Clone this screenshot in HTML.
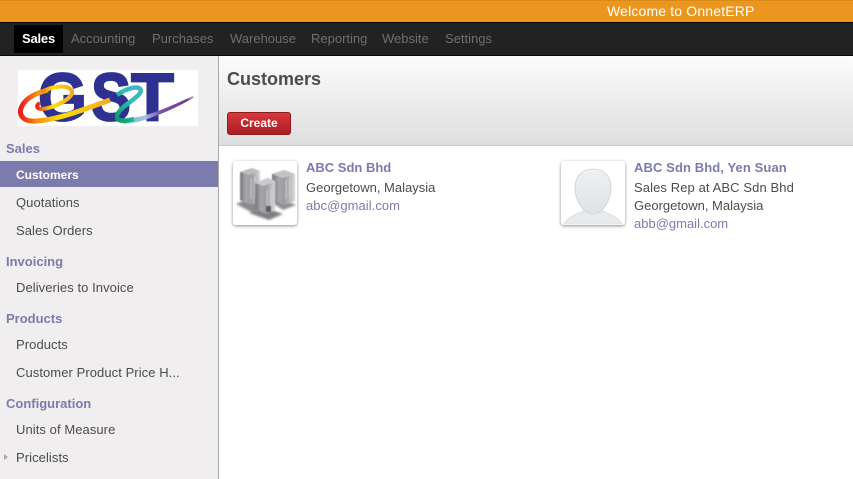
<!DOCTYPE html>
<html><head><meta charset="utf-8">
<style>
html,body{margin:0;padding:0;width:853px;height:479px;overflow:hidden;background:#fff;font-family:"Liberation Sans",Arial,sans-serif;font-size:13px;color:#4c4c4c}
.a{position:absolute;white-space:nowrap}
#top{left:0;top:0;width:853px;height:22px;background:#eb971f;border-top:1px solid #d98a18;box-sizing:border-box}
#nav{left:0;top:22px;width:853px;height:34px;background:#222;border-top:1px solid #0a0a0a;border-bottom:1px solid #0a0a0a;box-sizing:border-box}
.n{top:31px;font-size:13px;line-height:16px;color:#6f6f6f}
#side{left:0;top:56px;width:218px;height:423px;background:#f0eeee;border-right:1px solid #a9a9a9}
.h{left:6px;font-weight:bold;color:#7c7bad;font-size:13px;line-height:16px}
.i{left:16px;color:#4c4c4c;font-size:13px;line-height:16px;letter-spacing:.07px}
.t{font-size:13px;line-height:16px}
.card{width:64px;height:64px;background:#fff;border-radius:3px;box-shadow:0 1px 3px rgba(0,0,0,.45)}
</style></head><body>
<div class="a" id="top"></div>
<div class="a" style="left:607px;top:3px;color:#fff;font-size:14px;line-height:16px;letter-spacing:.16px">Welcome to OnnetERP</div>
<div class="a" id="nav"></div>
<div class="a" style="left:14px;top:25px;width:49px;height:28px;background:#000"></div>
<div class="a n" style="left:22px;color:#fff;font-weight:bold;font-size:13px;letter-spacing:-.2px">Sales</div>
<div class="a n" style="left:71px">Accounting</div>
<div class="a n" style="left:152px">Purchases</div>
<div class="a n" style="left:230px">Warehouse</div>
<div class="a n" style="left:311px">Reporting</div>
<div class="a n" style="left:382px">Website</div>
<div class="a n" style="left:445px">Settings</div>

<div class="a" id="side"></div>
<svg class="a" style="left:18px;top:70px" width="180" height="56" viewBox="0 0 180 56">
<defs>
<linearGradient id="r" x1="0" y1="0" x2="1" y2="0"><stop offset="0" stop-color="#e8201c"/><stop offset=".18" stop-color="#f78a14"/><stop offset=".45" stop-color="#ffdf00"/><stop offset="1" stop-color="#f5a623"/></linearGradient>
<linearGradient id="z" x1="0" y1="1" x2="1" y2="0"><stop offset="0" stop-color="#0a9a68"/><stop offset=".6" stop-color="#2cc0b8"/><stop offset="1" stop-color="#3fb4c8"/></linearGradient>
<linearGradient id="p" x1="0" y1="0" x2="1" y2="0"><stop offset="0" stop-color="#5cc4cc"/><stop offset=".3" stop-color="#a6c4e4"/><stop offset=".52" stop-color="#7d55a8"/><stop offset=".9" stop-color="#6a3a9a"/><stop offset="1" stop-color="#cdbbdc"/></linearGradient>
</defs>
<rect width="180" height="56" fill="#fff"/>
<g font-family="Liberation Sans" font-weight="bold" font-size="68" fill="#2e3192" stroke="#2e3192" stroke-width="1.8">
<text x="20" y="50.5" textLength="49" lengthAdjust="spacingAndGlyphs">G</text>
<text x="73" y="50.5" textLength="40" lengthAdjust="spacingAndGlyphs">S</text>
<text x="113" y="50.5" textLength="43" lengthAdjust="spacingAndGlyphs">T</text>
</g>
<path d="M92 30C70 38 40 50 18 51C4 52 0 44 4 36C8 28 18 23 30 20" fill="none" stroke="url(#r)" stroke-width="5"/>
<path d="M24 22C34 16 50 14 54 21C56 28 36 38 24 39C18 39 18 35 22 33" fill="none" stroke="url(#r)" stroke-width="4"/>
<path d="M112 48C130 47 155 35 175 26L176 27.5C160 37 140 46 120 52L105 54Z" fill="url(#p)"/>
<path d="M99 25C106 20 116 16 121 18C126 21 120 26 112 32C105 37 98 43 99 48C101 52 108 51 116 49" fill="none" stroke="url(#z)" stroke-width="4.5"/>
</svg>

<div class="a h" style="top:141px">Sales</div>
<div class="a" style="left:0;top:161px;width:218px;height:26px;background:#7c7bad"></div>
<div class="a i" style="top:167px;color:#fff;font-weight:bold;font-size:12px;letter-spacing:0">Customers</div>
<div class="a i" style="top:195px">Quotations</div>
<div class="a i" style="top:223px">Sales Orders</div>
<div class="a h" style="top:254px">Invoicing</div>
<div class="a i" style="top:280px">Deliveries to Invoice</div>
<div class="a h" style="top:311px">Products</div>
<div class="a i" style="top:337px">Products</div>
<div class="a i" style="top:365px">Customer Product Price H...</div>
<div class="a h" style="top:396px">Configuration</div>
<div class="a i" style="top:422px">Units of Measure</div>
<div class="a i" style="top:450px">Pricelists</div>
<div class="a" style="left:4px;top:454px;width:0;height:0;border-left:4px solid #a8a8a8;border-top:3.5px solid transparent;border-bottom:3.5px solid transparent"></div>

<div class="a" style="left:219px;top:56px;width:634px;height:90px;background:linear-gradient(#fcfcfc,#dedede);border-bottom:1px solid #c9c9c9;box-sizing:border-box"></div>
<div class="a" style="left:227px;top:68px;font-size:18px;line-height:22px;font-weight:bold;color:#4c4c4c">Customers</div>
<div class="a" style="left:227px;top:112px;width:64px;height:23px;box-sizing:border-box;border:1px solid #8e1a1d;border-radius:3px;background:linear-gradient(#d8393c,#a81e22);color:#fff;font-weight:bold;font-size:12px;line-height:21px;text-align:center">Create</div>

<div class="a card" style="left:233px;top:161px"></div>
<svg class="a" style="left:233px;top:161px" width="64" height="64" viewBox="0 0 64 64">
<defs>
<linearGradient id="b" x1="0" y1="0" x2="1" y2="0"><stop offset="0" stop-color="#77777c"/><stop offset=".3" stop-color="#a6a6ab"/><stop offset=".55" stop-color="#9b9ba0"/><stop offset="1" stop-color="#d8d8da"/></linearGradient>
<filter id="bl"><feGaussianBlur stdDeviation=".4"/></filter>
<filter id="bl2"><feGaussianBlur stdDeviation="1"/></filter>
</defs>
<path d="M3 43L14 38L32 46L20 52Z" fill="#8a8a8d" filter="url(#bl2)"/>
<path d="M36 40L46 36L63 44L50 49Z" fill="#8f8f92" filter="url(#bl2)"/>
<path d="M16 52L30 46L50 53L36 59Z" fill="#808083" filter="url(#bl2)"/>
<g filter="url(#bl)">
<path d="M7 11L19 7L27 10V40L18 44L7 39Z" fill="url(#b)"/>
<path d="M7 11L19 7L27 10L16 14Z" fill="#bdbdc0"/>
<path d="M39 13L51 9L62 13V40L52 44L39 39Z" fill="url(#b)"/>
<path d="M39 13L51 9L62 13L50 17Z" fill="#c3c3c6"/>
<path d="M53 19V38M57 18V37M18 17V38M22 16V37" stroke="#dcdcde" stroke-width=".7" fill="none"/>
<path d="M22 22L35 17L42 20V49L33 53L22 48Z" fill="url(#b)"/>
<path d="M22 22L35 17L42 20L31 25Z" fill="#cbcbce"/>
<path d="M34 29V45M38 28V44" stroke="#dcdcde" stroke-width=".7" fill="none"/>
<rect x="33" y="45" width="5" height="6" fill="#5c5c5f"/>
</g>
</svg>
<div class="a t" style="left:306px;top:160px;font-weight:bold;color:#7c7bad">ABC Sdn Bhd</div>
<div class="a t" style="left:306px;top:180px">Georgetown, Malaysia</div>
<div class="a t" style="left:306px;top:198px;color:#7c7bad;letter-spacing:.05px">abc@gmail.com</div>

<div class="a card" style="left:561px;top:161px"></div>
<svg class="a" style="left:561px;top:161px" width="64" height="64" viewBox="0 0 64 64">
<defs>
<linearGradient id="f" x1="0" y1="0" x2="0" y2="1"><stop offset="0" stop-color="#eef0f2"/><stop offset="1" stop-color="#dfe2e7"/></linearGradient>
</defs>
<path d="M3 63C7 55 18 52 26 48H38C46 52 57 55 61 63Z" fill="#e8eaed" stroke="#d5d8dd" stroke-width=".6"/>
<path d="M32 8C44 8 50 16 50 27C50 40 41 53 32 53C23 53 14 40 14 27C14 16 20 8 32 8Z" fill="url(#f)" stroke="#cdd0d7" stroke-width=".8"/>
</svg>
<div class="a t" style="left:634px;top:160px;font-weight:bold;color:#7c7bad;letter-spacing:.1px">ABC Sdn Bhd, Yen Suan</div>
<div class="a t" style="left:634px;top:180px;letter-spacing:.1px">Sales Rep at ABC Sdn Bhd</div>
<div class="a t" style="left:634px;top:198px">Georgetown, Malaysia</div>
<div class="a t" style="left:634px;top:216px;color:#7c7bad">abb@gmail.com</div>
</body></html>
